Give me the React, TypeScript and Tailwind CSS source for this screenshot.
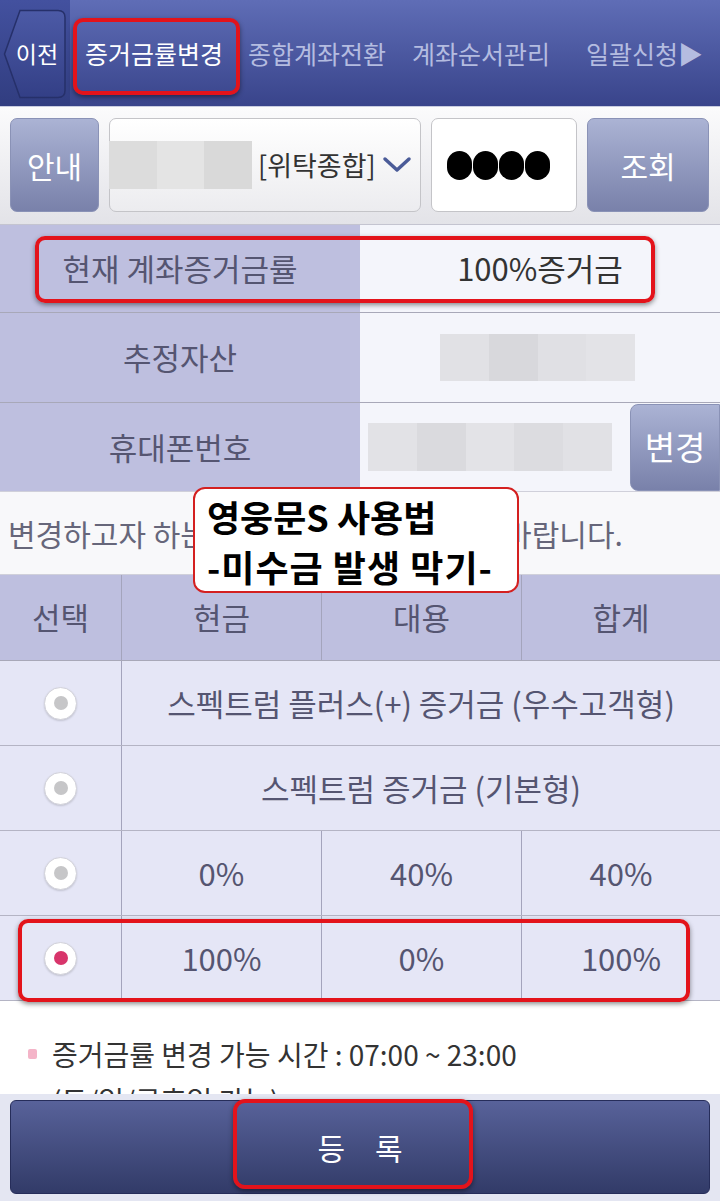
import React from 'react'

const redBox = 'pointer-events-none absolute rounded-[10px] border-[4px] border-[#e3131b] shadow-[0_2px_5px_rgba(0,0,0,0.45)]'

function Blur({ cells, className }: { cells: string[]; className?: string }) {
  return (
    <div className={`flex ${className ?? ''}`}>
      {cells.map((c, i) => (
        <div key={i} className={`h-full flex-1 ${c}`} />
      ))}
    </div>
  )
}

function Radio({ on }: { on?: boolean }) {
  return (
    <div className="flex h-[33px] w-[33px] items-center justify-center rounded-full border border-[#d2d2da] bg-white shadow-[0_1px_2px_rgba(0,0,0,0.15)]">
      <div className={`h-[14px] w-[14px] rounded-full ${on ? 'bg-[#d8356b]' : 'bg-[#c6c6c8]'}`} />
    </div>
  )
}

function Cell({ children, first, span }: { children?: React.ReactNode; first?: boolean; span?: boolean }) {
  return (
    <div
      className={`flex items-center justify-center whitespace-nowrap ${first ? '' : 'border-l border-[#a4a4bc]'} ${span ? 'col-span-3' : ''}`}
    >
      {children}
    </div>
  )
}

export default function App() {
  const rows: { pct?: string[]; label?: string; on?: boolean }[] = [
    { label: '스펙트럼 플러스(+) 증거금 (우수고객형)' },
    { label: '스펙트럼 증거금 (기본형)' },
    { pct: ['0%', '40%', '40%'] },
    { pct: ['100%', '0%', '100%'], on: true },
  ]

  return (
    <div className="relative h-[1202px] w-[720px] overflow-hidden bg-white font-['Noto_Sans_CJK_KR',sans-serif] text-[#555571]">
      {/* top nav */}
      <div className="relative flex h-[107px] items-center border-b border-[#c8cce0] bg-gradient-to-b from-[#5f6db6] to-[#39448b]">
        <div className="relative flex h-full w-[70px] shrink-0 items-center justify-center bg-gradient-to-b from-[#43519f] to-[#313d80]">
          <svg className="absolute left-[3px] top-[9px]" width="64" height="90" viewBox="0 0 64 90">
            <defs>
              <linearGradient id="bk" x1="0" y1="0" x2="0" y2="1">
                <stop offset="0" stopColor="#4c5aa6" />
                <stop offset="1" stopColor="#333f86" />
              </linearGradient>
            </defs>
            <path d="M17 1.5 H55 Q62 1.5 62 8.5 V81.5 Q62 88.5 55 88.5 H17 L1.5 45 Z" fill="url(#bk)" stroke="#26306a" strokeWidth="1.5" />
          </svg>
          <span className="relative ml-[4px] text-[23px] leading-none text-white">이전</span>
        </div>
        <span className="ml-[15px] shrink-0 whitespace-nowrap text-[25px] leading-none text-white">증거금률변경</span>
        <span className="ml-[25px] shrink-0 whitespace-nowrap text-[25px] leading-none text-[#b4bce0]">종합계좌전환</span>
        <span className="ml-[26px] shrink-0 whitespace-nowrap text-[25px] leading-none text-[#b4bce0]">계좌순서관리</span>
        <span className="ml-[36px] shrink-0 whitespace-nowrap text-[25px] leading-none text-[#b4bce0]">일괄신청▶</span>
        <div className={`${redBox} left-[73px] top-[18px] h-[77px] w-[167px]`} />
      </div>

      {/* account row */}
      <div className="flex h-[118px] items-start gap-[10px] border-b border-[#c4c4d0] bg-gradient-to-b from-[#fbfbfc] to-[#e3e3e8] px-[10px] pt-[11px]">
        <div className="flex h-[94px] w-[89px] items-center justify-center rounded-[7px] border border-[#8a92b6] bg-gradient-to-b from-[#abb3d4] to-[#7981aa] text-[30px] text-white">
          안내
        </div>
        <div className="flex h-[94px] w-[312px] items-center rounded-[7px] border border-[#c4c4c8] bg-gradient-to-b from-white to-[#ececef]">
          <Blur className="ml-[-1px] h-[48px] w-[143px]" cells={['bg-[#dcdcdc]', 'bg-[#e4e4e4]', 'bg-[#d9d9d9]']} />
          <span className="ml-[6px] whitespace-nowrap text-[27px] text-[#333]">[위탁종합]</span>
          <svg className="ml-[6px]" width="30" height="20" viewBox="0 0 30 20">
            <path d="M3 4 L15 15 L27 4" fill="none" stroke="#4a5b98" strokeWidth="3.5" strokeLinecap="round" strokeLinejoin="round" />
          </svg>
        </div>
        <div className="flex h-[94px] w-[146px] items-center gap-[1px] rounded-[7px] border border-[#c4c4c8] bg-white pl-[15px]">
          {[0, 1, 2, 3].map((i) => (
            <span key={i} className="h-[29px] w-[25px] rounded-full bg-black" />
          ))}
        </div>
        <div className="flex h-[94px] w-[122px] items-center justify-center rounded-[7px] border border-[#8a92b6] bg-gradient-to-b from-[#abb3d4] to-[#7981aa] text-[30px] text-white">
          조회
        </div>
      </div>

      {/* info rows */}
      <div className="relative">
        <div className="flex h-[88px] border-b border-[#a8a8b8]">
          <div className="flex w-[360px] items-center justify-center whitespace-nowrap bg-[#bebfdf] text-[31px]">현재 계좌증거금률</div>
          <div className="flex flex-1 items-center justify-center bg-[#f4f5fb] text-[31px] text-[#333]">100%증거금</div>
        </div>
        <div className="flex h-[90px] border-b border-[#a8a8b8]">
          <div className="flex w-[360px] items-center justify-center bg-[#bebfdf] text-[31px]">추정자산</div>
          <div className="flex flex-1 items-center bg-[#f4f5fb] pl-[80px]">
            <Blur className="h-[47px] w-[195px]" cells={['bg-[#e1e1e5]', 'bg-[#d8d8dc]', 'bg-[#e0e0e4]', 'bg-[#e3e3e7]']} />
          </div>
        </div>
        <div className="flex h-[88px]">
          <div className="flex w-[360px] items-center justify-center bg-[#bebfdf] text-[31px]">휴대폰번호</div>
          <div className="flex flex-1 items-center bg-[#f4f5fb] pl-[8px]">
            <Blur className="h-[48px] w-[244px]" cells={['bg-[#e2e2e6]', 'bg-[#dadade]', 'bg-[#e3e3e7]', 'bg-[#dcdce0]', 'bg-[#e1e1e5]']} />
            <div className="ml-[18px] flex h-[87px] flex-1 items-center justify-center rounded-l-[8px] border border-[#8a92b6] bg-gradient-to-b from-[#abb3d4] to-[#7981aa] text-[33px] text-white">
              변경
            </div>
          </div>
        </div>
        <div className={`${redBox} left-[35px] top-[11px] h-[67px] w-[620px]`} />
      </div>

      {/* notice */}
      <div className="relative flex h-[84px] items-center border-y border-[#d0d0da] bg-[#f8f8fa] pl-[8px] text-[30px] text-[#66667a]">
        <span className="whitespace-nowrap">변경하고자 하는 증거금률을 선택하시기 바랍니다.</span>
        <div className="absolute left-[193px] top-[-5px] z-10 h-[106px] w-[326px] rounded-[12px] border-2 border-[#d42020] bg-white pl-[12px] pt-[2px] text-[36px] font-bold leading-[50px] text-black">
          <div className="whitespace-nowrap">영웅문S 사용법</div>
          <div className="whitespace-nowrap tracking-[1px]">-미수금 발생 막기-</div>
        </div>
      </div>

      {/* table */}
      <div className="relative">
        <div className="grid h-[86px] grid-cols-[121px_200px_200px_199px] border-b border-[#a8a8b8] bg-[#bebfdf] text-[31px]">
          <Cell first>선택</Cell>
          <Cell>현금</Cell>
          <Cell>대용</Cell>
          <Cell>합계</Cell>
        </div>
        {rows.map((r, i) => (
          <div key={i} className="grid h-[85px] grid-cols-[121px_200px_200px_199px] border-b border-[#b4b4c4] bg-[#e5e6f6] text-[31px]">
            <Cell first>
              <Radio on={r.on} />
            </Cell>
            {r.label ? (
              <Cell span>{r.label}</Cell>
            ) : (
              r.pct!.map((p, j) => <Cell key={j}>{p}</Cell>)
            )}
          </div>
        ))}
        <div className={`${redBox} left-[18px] top-[344px] h-[83px] w-[672px]`} />
      </div>

      {/* note */}
      <div className="h-[93px] overflow-hidden bg-white pl-[28px] pt-[30px] text-[28px] leading-[46px] text-[#333]">
        <div className="flex items-center">
          <span className="mr-[15px] h-[10px] w-[9px] rounded-[2px] bg-[#f4b4c8]" />
          <span className="whitespace-nowrap">증거금률 변경 가능 시간 : 07:00 ~ 23:00</span>
        </div>
        <div className="pl-[24px]">(토/일/공휴일 가능)</div>
      </div>

      {/* bottom */}
      <div className="relative h-[107px] bg-[#e4e6f2] px-[10px] pt-[6px]">
        <div className="flex h-[94px] items-center justify-center gap-[30px] rounded-[6px] border border-[#262d5a] bg-gradient-to-b from-[#58629a] to-[#323b68] text-[30px] text-white">
          <span>등</span>
          <span>록</span>
        </div>
        <div className={`${redBox} left-[233px] top-[5px] h-[90px] w-[240px] rounded-[12px]`} />
      </div>
    </div>
  )
}
